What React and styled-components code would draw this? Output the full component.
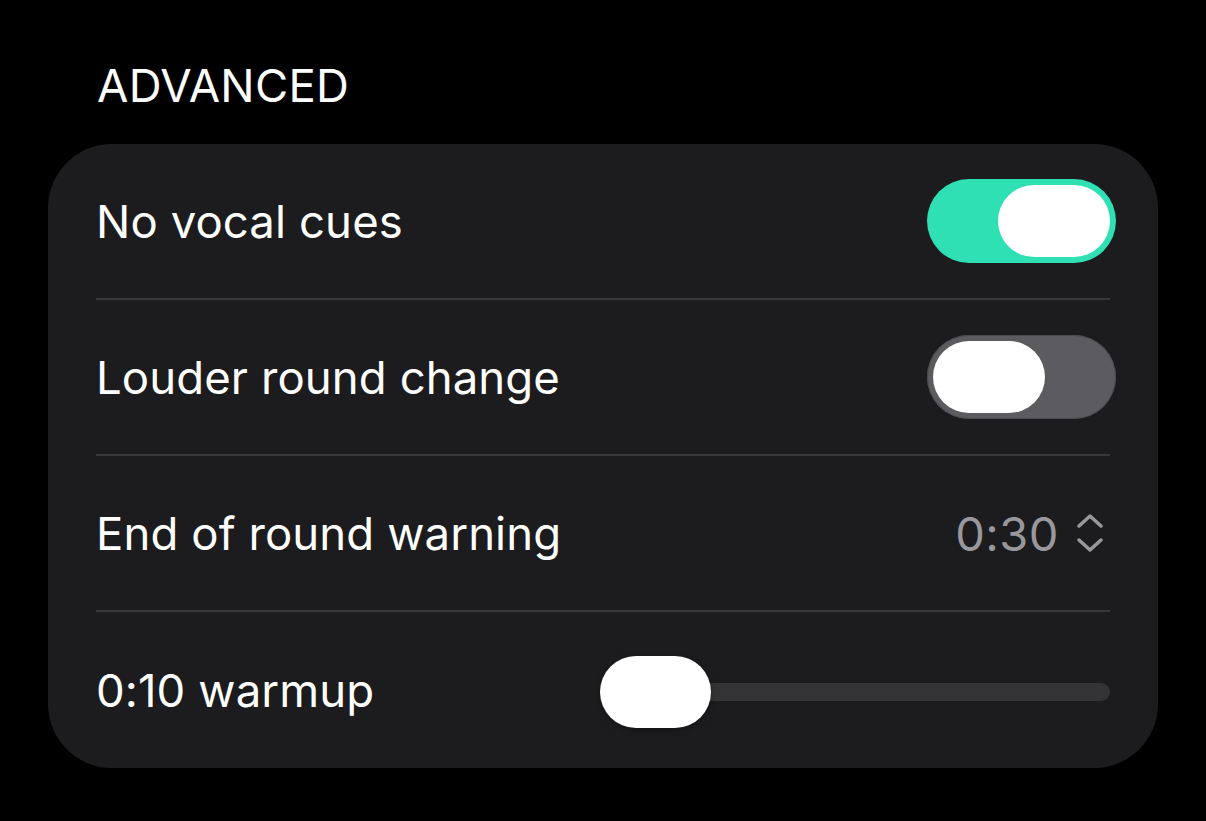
import React, { useState } from 'react';
import styled, { createGlobalStyle } from 'styled-components';

const GlobalStyle = createGlobalStyle`
  html, body {
    margin: 0;
    padding: 0;
    background: #000;
  }
  body {
    font-family: Inter, "Noto Sans", "Liberation Sans", sans-serif;
    -webkit-font-smoothing: antialiased;
  }
`;

const Page = styled.div`
  width: 1206px;
  height: 821px;
  background: #000;
  padding: 58px 48px 0;
  box-sizing: border-box;
`;

const SectionTitle = styled.div`
  color: #fff;
  font-size: 45.5px;
  line-height: 56px;
  letter-spacing: 0.25px;
  padding-left: 49px;
  margin-bottom: 30px;
  text-transform: uppercase;
`;

const Card = styled.div`
  width: 1110px;
  background: #1c1c1e;
  border-radius: 64px;
  padding: 0 48px;
  box-sizing: border-box;
`;

const Row = styled.div`
  display: flex;
  align-items: center;
  justify-content: space-between;
  height: ${(p) => p.$height || 154}px;
  border-top: ${(p) => (p.$first ? 'none' : '2px solid #38383a')};
`;

const Label = styled.span`
  color: #fff;
  font-size: 45.5px;
  letter-spacing: 0.1px;
`;

const ToggleTrack = styled.button`
  width: 189px;
  height: 84px;
  border-radius: 42px;
  border: none;
  padding: 6px;
  margin-right: -6px;
  display: flex;
  justify-content: ${(p) => (p.$on ? 'flex-end' : 'flex-start')};
  background: ${(p) => (p.$on ? '#30e0b5' : '#5c5c60')};
  box-shadow: ${(p) => (p.$on ? 'none' : 'inset 0 0 0 1px #4a4a4e')};
  cursor: pointer;
  box-sizing: border-box;
`;

const ToggleKnob = styled.span`
  width: 112px;
  height: 72px;
  border-radius: 36px;
  background: #fff;
`;

const Stepper = styled.div`
  display: flex;
  align-items: center;
  gap: 17px;
  margin-right: 6px;
  color: #98989d;
  font-size: 47px;
  letter-spacing: 0.5px;
`;

const SliderBox = styled.div`
  position: relative;
  width: 510px;
  height: 72px;
  display: flex;
  align-items: center;
  margin-top: 4px;
`;

const SliderTrack = styled.div`
  width: 100%;
  height: 18px;
  border-radius: 9px;
  background: #333336;
`;

const SliderThumb = styled.div`
  position: absolute;
  top: 0;
  width: 111px;
  height: 72px;
  border-radius: 36px;
  background: #fff;
  box-shadow: 0 2px 6px rgba(0, 0, 0, 0.3);
`;

function Toggle({ on, onChange }) {
  return (
    <ToggleTrack $on={on} onClick={() => onChange(!on)}>
      <ToggleKnob />
    </ToggleTrack>
  );
}

function ChevronUpDown() {
  return (
    <svg width="28" height="40" viewBox="0 0 28 40" fill="none">
      <path d="M3 13 L14 3 L25 13" stroke="#98989d" strokeWidth="3.5" strokeLinecap="round" strokeLinejoin="round" />
      <path d="M3 27 L14 37 L25 27" stroke="#98989d" strokeWidth="3.5" strokeLinecap="round" strokeLinejoin="round" />
    </svg>
  );
}

export default function App() {
  const [noVocal, setNoVocal] = useState(true);
  const [louder, setLouder] = useState(false);
  const warmup = 0;

  return (
    <Page>
      <GlobalStyle />
      <SectionTitle>Advanced</SectionTitle>
      <Card>
        <Row $first>
          <Label>No vocal cues</Label>
          <Toggle on={noVocal} onChange={setNoVocal} />
        </Row>
        <Row>
          <Label>Louder round change</Label>
          <Toggle on={louder} onChange={setLouder} />
        </Row>
        <Row>
          <Label>End of round warning</Label>
          <Stepper>
            0:30
            <ChevronUpDown />
          </Stepper>
        </Row>
        <Row $height={156}>
          <Label>0:10 warmup</Label>
          <SliderBox>
            <SliderTrack />
            <SliderThumb style={{ left: `${warmup * (510 - 111)}px` }} />
          </SliderBox>
        </Row>
      </Card>
    </Page>
  );
}
